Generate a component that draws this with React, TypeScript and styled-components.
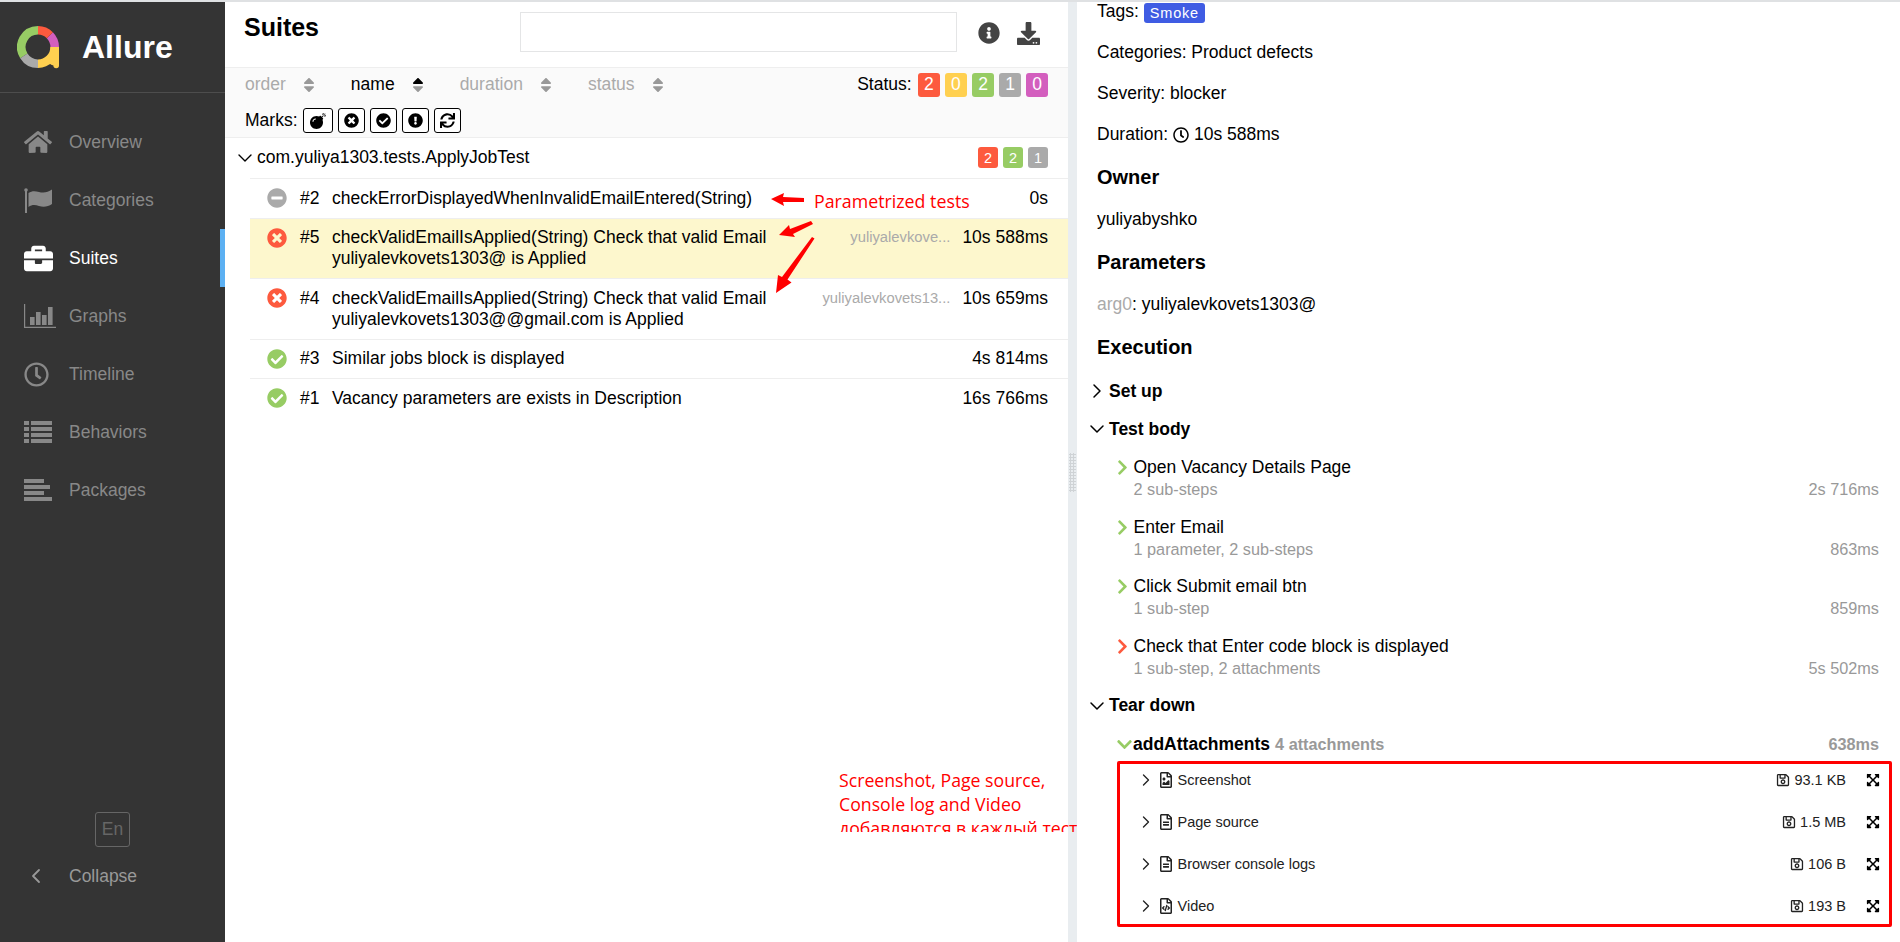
import React from 'react';
import styled, { createGlobalStyle } from 'styled-components';
import { ChevronDown, ChevronRight, ChevronLeft } from 'lucide-react';
import {
  FaHome, FaBriefcase, FaRegClock, FaInfoCircle, FaDownload,
  FaBomb, FaTimesCircle, FaCheckCircle, FaExclamationCircle, FaSync, FaMinusCircle, FaChevronRight,
  FaChevronDown, FaRegFileAlt, FaRegFileImage, FaRegFileCode, FaRegSave, FaExpandArrowsAlt,
  FaSortUp, FaSortDown,
} from 'react-icons/fa';

const Global = createGlobalStyle`
  html, body { margin: 0; padding: 0; background: #fff; overflow: hidden; }
  body { font-family: "Liberation Sans", Arial, sans-serif; font-size: 17.5px; color: #000; }
`;

const COLORS = { failed: '#fd5a3e', broken: '#ffd050', passed: '#97cc64', skipped: '#aaa', unknown: '#d35ebe' };

// Layout
const Page = styled.div`
  position: relative;
  display: grid;
  grid-template-columns: 225px 843px 9px 823px;
  width: 1900px;
  height: 942px;
  box-sizing: border-box;
  border-top: 2px solid #dfe1e3;
  overflow: hidden;
`;

// Sidebar
const Sidebar = styled.aside`
  display: flex;
  flex-direction: column;
  background: #343434;
  height: 940px;
`;
const Brand = styled.div`
  display: flex;
  align-items: center;
  height: 91px;
  box-sizing: border-box;
  padding-left: 17px;
  gap: 23px;
  border-bottom: 1px solid #4d4d4d;
  margin-bottom: 20px;
  color: #fff;
  font-size: 32px;
  font-weight: bold;
`;
const NavItem = styled.div<{ $active?: boolean }>`
  display: flex;
  align-items: center;
  height: 58px;
  padding-left: 24px;
  box-sizing: border-box;
  color: ${(p) => (p.$active ? '#fff' : '#888')};
  border-right: 5px solid ${(p) => (p.$active ? '#5cb0f2' : 'transparent')};
`;
const NavIcon = styled.span`
  display: flex;
  align-items: center;
  width: 45px;
  flex: none;
`;
const SideFooter = styled.div`
  margin-top: auto;
  padding-bottom: 37px;
  display: flex;
  flex-direction: column;
`;
const LangButton = styled.div`
  align-self: center;
  width: 35px;
  height: 35px;
  box-sizing: border-box;
  display: flex;
  align-items: center;
  justify-content: center;
  border: 1px solid #666;
  border-radius: 3px;
  color: #666;
  font-size: 17.5px;
`;
const Collapse = styled(NavItem)`
  color: #999;
  padding-left: 24px;
`;

// Left pane
const LeftPane = styled.section`
  display: flex;
  flex-direction: column;
  min-width: 0;
`;
const Header = styled.header`
  display: flex;
  align-items: flex-start;
  height: 65px;
  box-sizing: border-box;
  padding: 10px 0 0 19px;
`;
const Title = styled.h2`
  margin: 0;
  width: 276px;
  font-size: 25px;
  line-height: 30px;
  font-weight: bold;
`;
const Search = styled.div`
  width: 437px;
  height: 40px;
  box-sizing: border-box;
  border: 1px solid #e4e5e6;
`;
const HeaderIcons = styled.div`
  display: flex;
  align-items: center;
  height: 42px;
  margin-left: 21px;
  gap: 17px;
  color: #444;
`;
const Toolbar = styled.div`
  background: #fafafa;
  border-top: 1px solid #eee;
  border-bottom: 1px solid #eee;
  height: 71px;
  box-sizing: border-box;
  padding: 0 20px;
`;
const ToolRow = styled.div`
  display: flex;
  align-items: center;
  height: 33px;
`;
const Sorter = styled.span<{ $active?: boolean }>`
  display: inline-flex;
  align-items: center;
  gap: 17px;
  margin-right: 36px;
  color: ${(p) => (p.$active ? '#000' : '#aaa')};
`;
const SortIcon = styled.span<{ $active?: boolean }>`
  position: relative;
  display: inline-block;
  width: 12px;
  height: 18px;
  color: #999;
  svg { position: absolute; left: -3px; top: 0; }
  svg:first-child { color: ${(p) => (p.$active ? '#000' : '#999')}; }
`;
const StatusGroup = styled.div`
  margin-left: auto;
  display: flex;
  align-items: center;
  gap: 5.4px;
`;
const StatusLabel = styled.span`
  margin-right: 1px;
`;
const Badge = styled.span<{ $bg: string; $small?: boolean }>`
  display: inline-flex;
  align-items: center;
  justify-content: center;
  width: ${(p) => (p.$small ? '20px' : '21.7px')};
  height: ${(p) => (p.$small ? '21px' : '24px')};
  border-radius: 3px;
  background: ${(p) => p.$bg};
  color: #fff;
  font-size: ${(p) => (p.$small ? '14.5px' : '17.5px')};
`;
const MarksRow = styled(ToolRow)`
  height: 36px;
  gap: 5px;
  padding-top: 3px;
  box-sizing: border-box;
`;
const MarkButton = styled.span<{ $wide?: boolean }>`
  display: inline-flex;
  align-items: center;
  justify-content: center;
  width: ${(p) => (p.$wide ? '30px' : '27px')};
  height: 25px;
  box-sizing: border-box;
  border: 1px solid #000;
  border-radius: 3px;
  background: #fff;
`;
const GroupRow = styled.div`
  display: flex;
  align-items: center;
  height: 40px;
  padding: 0 20px 1px 7.5px;
  box-sizing: border-box;
  gap: 0.5px;
`;
const GroupBadges = styled.div`
  margin-left: auto;
  display: flex;
  gap: 5px;
`;
const TestRow = styled.div<{ $selected?: boolean }>`
  display: flex;
  align-items: flex-start;
  margin-left: 25px;
  padding: 8.75px 20px 8.75px 17px;
  line-height: 21px;
  border-top: 1px solid #eee;
  background: ${(p) => (p.$selected ? '#fdf7cd' : 'transparent')};
`;
const TestIcon = styled.span<{ $color: string }>`
  display: flex;
  align-items: center;
  height: 21px;
  width: 33px;
  flex: none;
  color: ${(p) => p.$color};
`;
const TestNumber = styled.span`
  width: 32px;
  flex: none;
`;
const TestName = styled.span`
  width: 480px;
  flex: none;
`;
const TestParam = styled.span`
  flex: 1;
  min-width: 0;
  text-align: right;
  font-size: 14.75px;
  color: #aaa;
  padding-right: 12px;
`;
const TestTime = styled.span`
  flex: none;
`;

// Splitter
const Splitter = styled.div`
  display: flex;
  align-items: center;
  justify-content: center;
  background: #e9edf0;
  height: 940px;
`;
const Grip = styled.div`
  width: 7px;
  height: 39px;
  background-image: radial-gradient(#cfd3d6 1px, transparent 1.2px);
  background-size: 3px 3px;
`;

// Right pane
const RightPane = styled.section`
  overflow: hidden;
  height: 940px;
  padding-left: 20px;
  padding-right: 21px;
`;
const InfoLine = styled.div`
  display: flex;
  align-items: center;
  gap: 5px;
  height: 41px;
  &:first-child { margin-top: -11px; }
`;
const Tag = styled.span`
  display: inline-flex;
  align-items: center;
  height: 20px;
  padding: 0 6px;
  margin-left: 0;
  margin-top: 2px;
  border-radius: 3px;
  background: #3f5ce3;
  color: #fff;
  font-size: 14.5px;
  letter-spacing: 0.8px;
`;
const Heading = styled.h3`
  margin: 0;
  height: 44px;
  line-height: 44px;
  font-size: 20px;
  font-weight: bold;
`;
const Muted = styled.span`
  color: #aaa;
`;
const StageRow = styled.div<{ $gap?: number }>`
  display: flex;
  align-items: center;
  height: 38px;
  margin: ${(p) => p.$gap || 0}px 0 0 -12px;
  font-weight: bold;
`;
const StepBlock = styled.div`
  height: 59.67px;
  box-sizing: border-box;
  padding: 9px 0 0 20px;
`;
const StepTitle = styled.div`
  display: flex;
  align-items: center;
  height: 21px;
`;
const StepMarker = styled.span<{ $color: string }>`
  display: inline-flex;
  width: 19.5px;
  margin-left: -3px;
  flex: none;
  color: ${(p) => p.$color};
`;
const StepMeta = styled.div`
  display: flex;
  justify-content: space-between;
  height: 22px;
  line-height: 22px;
  padding-left: 16.5px;
  color: #999;
  font-size: 16.25px;
`;
const AttachHead = styled.div`
  display: flex;
  align-items: center;
  height: 36px;
  box-sizing: border-box;
  padding: 3px 0 0 19px;
  font-weight: bold;
`;
const AttachMarker = styled.span`
  display: inline-flex;
  width: 17px;
  flex: none;
  color: ${COLORS.passed};
`;
const AttachCount = styled.span`
  margin-left: 5px;
  color: #999;
  font-size: 16.25px;
`;
const AttachTime = styled.span`
  margin-left: auto;
  color: #999;
  font-size: 16.25px;
`;
const AttachBox = styled.div`
  display: grid;
  grid-auto-rows: 33px;
  row-gap: 9px;
  height: 166px;
  margin: 0 -13px 0 20px;
  box-sizing: border-box;
  border: 3px solid #f00;
  border-radius: 2px;
`;
const AttachRow = styled.div`
  display: flex;
  align-items: center;
  padding-left: 16px;
  padding-right: 9px;
  font-size: 14.5px;
  color: #222;
`;
const AttachToggle = styled.span`
  display: inline-flex;
  width: 22px;
  flex: none;
`;
const AttachFile = styled.span`
  display: inline-flex;
  width: 19.5px;
  flex: none;
`;
const AttachSize = styled.span`
  margin-left: auto;
  display: inline-flex;
  align-items: center;
  gap: 4px;
`;
const AttachExpand = styled.span`
  display: inline-flex;
  margin-left: 20px;
  color: #000;
`;

// Annotations pasted over the report
const Arrows = styled.svg`
  position: absolute;
  left: 0;
  top: -2px;
  pointer-events: none;
`;
const NoteOne = styled.div`
  position: absolute;
  left: 814px;
  top: 187px;
  color: #f00;
  font-family: "Open Sans", sans-serif;
  font-size: 17.8px;
  line-height: 24px;
  white-space: nowrap;
`;
const NoteTwo = styled.div`
  position: absolute;
  left: 839px;
  top: 766px;
  height: 64px;
  overflow: hidden;
  color: #f00;
  font-family: "Open Sans", sans-serif;
  font-size: 17.7px;
  line-height: 24px;
  white-space: nowrap;
`;

function Logo() {
  const r = 16.7;
  const arc = (a: number, b: number) => {
    const p = (d: number) => {
      const t = ((d - 90) * Math.PI) / 180;
      return `${21 + r * Math.cos(t)} ${21 + r * Math.sin(t)}`;
    };
    return `M${p(a)} A${r} ${r} 0 ${b - a > 180 ? 1 : 0} 1 ${p(b)}`;
  };
  return (
    <svg width="42" height="43" viewBox="0 0 42 43" fill="none" strokeWidth="8.6">
      <path d={arc(238, 360)} stroke={COLORS.passed} />
      <path d={arc(180, 238)} stroke={COLORS.skipped} />
      <path d={arc(90, 180)} stroke={COLORS.broken} />
      <path d={arc(45, 90)} stroke={COLORS.unknown} />
      <path d={arc(0, 45)} stroke={COLORS.failed} />
      <path d="M33.5 21h8.5v18.5a2.8 2.8 0 0 1-5.6 0 8 8 0 0 1-4-2z" fill={COLORS.broken} />
    </svg>
  );
}

function FlagIcon() {
  return (
    <svg width="28" height="25" viewBox="0 0 28 25" fill="currentColor">
      <circle cx="2" cy="2" r="1.8" />
      <rect x="1" y="3" width="2" height="22" />
      <path d="M4.5 5C8 2.6 11 2.8 15 4c4 1.3 9 .6 13-2.4V16c-4 3-9 3.3-13 2-4-1.3-7-1.5-10.5 1z" />
    </svg>
  );
}

function GraphIcon() {
  return (
    <svg width="32" height="24" viewBox="0 0 32 24" fill="currentColor">
      <path d="M0 0h1.2v22.8H32V24H0z" />
      <rect x="6" y="13" width="4.6" height="8" />
      <rect x="12" y="8" width="4.6" height="13" />
      <rect x="18" y="11" width="4.6" height="10" />
      <rect x="24" y="3" width="4.6" height="18" />
    </svg>
  );
}

function ListIcon() {
  return (
    <svg width="28" height="22" viewBox="0 0 28 22" fill="currentColor">
      {[0, 6, 12, 18].map((y) => (
        <g key={y}>
          <rect x="0" y={y} width="5" height="4" />
          <rect x="7" y={y} width="21" height="4" />
        </g>
      ))}
    </svg>
  );
}

function PackagesIcon() {
  return (
    <svg width="28" height="22" viewBox="0 0 28 22" fill="currentColor">
      <rect x="0" y="0" width="20" height="4" />
      <rect x="0" y="6" width="26" height="4" />
      <rect x="0" y="12" width="20" height="4" />
      <rect x="0" y="18" width="28" height="4" />
    </svg>
  );
}

const navItems = [
  { label: 'Overview', icon: <FaHome size={28} /> },
  { label: 'Categories', icon: <FlagIcon /> },
  { label: 'Suites', icon: <FaBriefcase size={29} />, active: true },
  { label: 'Graphs', icon: <GraphIcon /> },
  { label: 'Timeline', icon: <FaRegClock size={25} /> },
  { label: 'Behaviors', icon: <ListIcon /> },
  { label: 'Packages', icon: <PackagesIcon /> },
];

const tests = [
  { n: '#2', name: 'checkErrorDisplayedWhenInvalidEmailEntered(String)', time: '0s', icon: FaMinusCircle, color: COLORS.skipped },
  { n: '#5', name: 'checkValidEmailIsApplied(String) Check that valid Email yuliyalevkovets1303@ is Applied', param: 'yuliyalevkove...', time: '10s 588ms', icon: FaTimesCircle, color: COLORS.failed, selected: true },
  { n: '#4', name: 'checkValidEmailIsApplied(String) Check that valid Email yuliyalevkovets1303@@gmail.com is Applied', param: 'yuliyalevkovets13...', time: '10s 659ms', icon: FaTimesCircle, color: COLORS.failed },
  { n: '#3', name: 'Similar jobs block is displayed', time: '4s 814ms', icon: FaCheckCircle, color: COLORS.passed },
  { n: '#1', name: 'Vacancy parameters are exists in Description', time: '16s 766ms', icon: FaCheckCircle, color: COLORS.passed },
];

const steps = [
  { name: 'Open Vacancy Details Page', meta: '2 sub-steps', time: '2s 716ms', color: COLORS.passed },
  { name: 'Enter Email', meta: '1 parameter, 2 sub-steps', time: '863ms', color: COLORS.passed },
  { name: 'Click Submit email btn', meta: '1 sub-step', time: '859ms', color: COLORS.passed },
  { name: 'Check that Enter code block is displayed', meta: '1 sub-step, 2 attachments', time: '5s 502ms', color: COLORS.failed },
];

const attachments = [
  { name: 'Screenshot', size: '93.1 KB', icon: FaRegFileImage },
  { name: 'Page source', size: '1.5 MB', icon: FaRegFileAlt },
  { name: 'Browser console logs', size: '106 B', icon: FaRegFileAlt },
  { name: 'Video', size: '193 B', icon: FaRegFileCode },
];

function Sort({ active }: { active?: boolean }) {
  return (
    <SortIcon $active={active}>
      <FaSortUp size={18} />
      <FaSortDown size={18} />
    </SortIcon>
  );
}

export default function App() {
  return (
    <Page>
      <Global />
      <Sidebar>
        <Brand><Logo />Allure</Brand>
        {navItems.map((item) => (
          <NavItem key={item.label} $active={item.active}>
            <NavIcon>{item.icon}</NavIcon>
            {item.label}
          </NavItem>
        ))}
        <SideFooter>
          <LangButton>En</LangButton>
          <Collapse>
            <NavIcon><ChevronLeft size={24} strokeWidth={1.8} /></NavIcon>
            Collapse
          </Collapse>
        </SideFooter>
      </Sidebar>

      <LeftPane>
        <Header>
          <Title>Suites</Title>
          <Search />
          <HeaderIcons>
            <FaInfoCircle size={22} />
            <FaDownload size={23} />
          </HeaderIcons>
        </Header>
        <Toolbar>
          <ToolRow>
            <Sorter>order<Sort /></Sorter>
            <Sorter $active>name<Sort active /></Sorter>
            <Sorter>duration<Sort /></Sorter>
            <Sorter>status<Sort /></Sorter>
            <StatusGroup>
              <StatusLabel>Status:</StatusLabel>
              <Badge $bg={COLORS.failed}>2</Badge>
              <Badge $bg={COLORS.broken}>0</Badge>
              <Badge $bg={COLORS.passed}>2</Badge>
              <Badge $bg={COLORS.skipped}>1</Badge>
              <Badge $bg={COLORS.unknown}>0</Badge>
            </StatusGroup>
          </ToolRow>
          <MarksRow>
            Marks:
            <MarkButton $wide><FaBomb size={16} /></MarkButton>
            <MarkButton><FaTimesCircle size={15} /></MarkButton>
            <MarkButton><FaCheckCircle size={15} /></MarkButton>
            <MarkButton><FaExclamationCircle size={15} /></MarkButton>
            <MarkButton><FaSync size={15} /></MarkButton>
          </MarksRow>
        </Toolbar>
        <GroupRow>
          <ChevronDown size={24} strokeWidth={1.4} />
          com.yuliya1303.tests.ApplyJobTest
          <GroupBadges>
            <Badge $small $bg={COLORS.failed}>2</Badge>
            <Badge $small $bg={COLORS.passed}>2</Badge>
            <Badge $small $bg={COLORS.skipped}>1</Badge>
          </GroupBadges>
        </GroupRow>
        {tests.map((t) => (
          <TestRow key={t.n} $selected={t.selected}>
            <TestIcon $color={t.color}><t.icon size={20} /></TestIcon>
            <TestNumber>{t.n}</TestNumber>
            <TestName>{t.name}</TestName>
            <TestParam>{t.param}</TestParam>
            <TestTime>{t.time}</TestTime>
          </TestRow>
        ))}
      </LeftPane>

      <Splitter><Grip /></Splitter>

      <RightPane>
        <InfoLine>Tags: <Tag>Smoke</Tag></InfoLine>
        <InfoLine>Categories: Product defects</InfoLine>
        <InfoLine>Severity: blocker</InfoLine>
        <InfoLine>Duration: <FaRegClock size={16} /> 10s 588ms</InfoLine>
        <Heading>Owner</Heading>
        <InfoLine>yuliyabyshko</InfoLine>
        <Heading>Parameters</Heading>
        <InfoLine><span><Muted>arg0</Muted>: yuliyalevkovets1303@</span></InfoLine>
        <Heading>Execution</Heading>
        <StageRow $gap={3}><ChevronRight size={24} strokeWidth={1.5} />Set up</StageRow>
        <StageRow><ChevronDown size={24} strokeWidth={1.5} />Test body</StageRow>
        {steps.map((s) => (
          <StepBlock key={s.name}>
            <StepTitle>
              <StepMarker $color={s.color}><FaChevronRight size={17} /></StepMarker>
              {s.name}
            </StepTitle>
            <StepMeta><span>{s.meta}</span><span>{s.time}</span></StepMeta>
          </StepBlock>
        ))}
        <StageRow><ChevronDown size={24} strokeWidth={1.5} />Tear down</StageRow>
        <AttachHead>
          <AttachMarker><FaChevronDown size={17} /></AttachMarker>
          addAttachments
          <AttachCount>4 attachments</AttachCount>
          <AttachTime>638ms</AttachTime>
        </AttachHead>
        <AttachBox>
          {attachments.map((a) => (
            <AttachRow key={a.name}>
              <AttachToggle><ChevronRight size={20} strokeWidth={1.6} /></AttachToggle>
              <AttachFile><a.icon size={16} /></AttachFile>
              <span>{a.name}</span>
              <AttachSize><FaRegSave size={14} />{a.size}</AttachSize>
              <AttachExpand><FaExpandArrowsAlt size={14} /></AttachExpand>
            </AttachRow>
          ))}
        </AttachBox>
      </RightPane>

      <Arrows width="1900" height="942" viewBox="0 0 1900 942" fill="#f00">
        <path d="M771 199l13-6-1 4 21 1v4l-21 0 1 4z" />
        <path d="M779 235l10-10 1 4 21-8 2 3-20 10 2 3z" />
        <path d="M776 293l2-18 4 2 30-40 2.5 1.5-27 41 4 3z" />
      </Arrows>
      <NoteOne>Parametrized tests</NoteOne>
      <NoteTwo>
        Screenshot, Page source,<br />
        Console log and Video<br />
        добавляются в каждый тест
      </NoteTwo>
    </Page>
  );
}
